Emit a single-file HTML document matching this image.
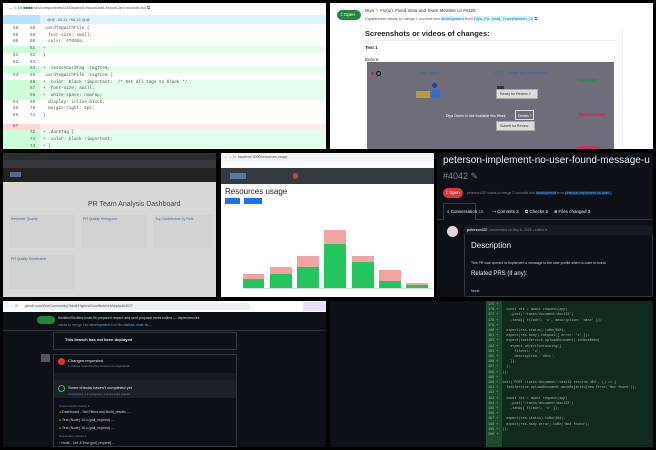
<!DOCTYPE html>
<html><head><meta charset="utf-8"><style>
*{margin:0;padding:0;box-sizing:border-box}
body{width:656px;height:450px;background:#000;position:relative;overflow:hidden;font-family:"Liberation Sans",sans-serif}
.p{position:absolute;overflow:hidden}
.a{position:absolute}
.r{position:absolute;left:0;right:0;height:6.7px;font:4.3px "Liberation Mono",monospace;color:#555;line-height:6.7px;white-space:nowrap}
.r i{position:absolute;font-style:normal}
.r .n1{left:10px}.r .n2{left:27px}.r .c{left:40px}
.g{background:#e6ffec}.g::before{content:"";position:absolute;left:0;top:0;width:37px;height:100%;background:#ccffd8}
.rd{background:#ffebe9}.rd::before{content:"";position:absolute;left:0;top:0;width:37px;height:100%;background:#ffd7d5}
.t{position:absolute;white-space:nowrap}
</style></head><body>

<!-- Panel 1 -->
<div class="p" style="left:3px;top:3px;width:323px;height:146px;background:#fff">
 <div class="t" style="left:6px;top:2px;font-size:4px;color:#555">⌄ ◇ 16 <span style="color:#1a7f37">■■■■</span> src/components/DASboard/LessonList/LessonCard.module.css ⧉</div>
 <div class="a" style="left:0;top:12px;width:323px;height:9px;background:#ddf4ff"></div>
 <div class="a" style="left:0;top:12px;width:37px;height:9px;background:#b6e3ff"></div>
 <div class="t" style="left:44px;top:14px;font-size:4px;color:#666">@@ -58,11 +58,16 @@</div>
 <div style="position:absolute;left:0;top:23px;width:323px">
  <div class="r" style="top:0"><i class="n1">58</i><i class="n2">58</i><i class="c">.cardTagWithFile {</i></div>
  <div class="r" style="top:6.7px"><i class="n1">59</i><i class="n2">59</i><i class="c">&nbsp;&nbsp;font-size: small;</i></div>
  <div class="r" style="top:13.4px"><i class="n1">60</i><i class="n2">60</i><i class="c">&nbsp;&nbsp;color: #70d8a;</i></div>
  <div class="r g" style="top:20.1px"><i class="n2">61</i><i class="c">+</i></div>
  <div class="r" style="top:26.8px"><i class="n1">61</i><i class="n2">62</i><i class="c">}</i></div>
  <div class="r" style="top:33.5px"><i class="n1">62</i><i class="n2">63</i></div>
  <div class="r g" style="top:40.2px"><i class="n2">64</i><i class="c">+ .lessonCardTag .tagItem,</i></div>
  <div class="r" style="top:46.9px"><i class="n1">63</i><i class="n2">65</i><i class="c">.cardTagWithFile .tagItem {</i></div>
  <div class="r g" style="top:53.6px"><i class="n2">66</i><i class="c">+ &nbsp;color: black !important; &nbsp;/* Set all tags to black */</i></div>
  <div class="r g" style="top:60.3px"><i class="n2">67</i><i class="c">+ &nbsp;font-size: small;</i></div>
  <div class="r g" style="top:67px"><i class="n2">68</i><i class="c">+ &nbsp;white-space: nowrap;</i></div>
  <div class="r" style="top:73.7px"><i class="n1">64</i><i class="n2">69</i><i class="c">&nbsp;&nbsp;display: inline-block;</i></div>
  <div class="r" style="top:80.4px"><i class="n1">65</i><i class="n2">70</i><i class="c">&nbsp;&nbsp;margin-right: 5px;</i></div>
  <div class="r" style="top:87.1px"><i class="n1">66</i><i class="n2">71</i><i class="c">}</i></div>
  <div class="r rd" style="top:97.5px"><i class="n1">67</i></div>
  <div class="r g" style="top:104.2px"><i class="n2">72</i><i class="c">+ .darkTag {</i></div>
  <div class="r g" style="top:110.9px"><i class="n2">73</i><i class="c">+ &nbsp;color: black !important;</i></div>
  <div class="r g" style="top:117.6px"><i class="n2">74</i><i class="c">+ }</i></div>
 </div>
</div>

<!-- Panel 2 -->
<div class="p" style="left:330px;top:3px;width:323px;height:146px;background:#fff">
 <div class="a" style="left:7px;top:7px;width:24px;height:10px;border-radius:5px;background:#1f883d"></div>
 <div class="t" style="left:11px;top:9px;font-size:4.5px;color:#fff">⟟ Open</div>
 <div class="t" style="left:35px;top:5px;font-size:4.5px;color:#333">Diya <span style="color:#d4a000">✎</span> Fix(ui): Fixed Insta and Team Member UI #5125</div>
 <div class="t" style="left:35px;top:13px;font-size:4px;color:#555">Diyafaheem wants to merge 1 commit into <span style="background:#ddf4ff;color:#0969da">development</span> from <span style="background:#ddf4ff;color:#0969da">Diya_Fix_Insta_TeamMember_UI</span> ⧉</div>
 <div class="a" style="left:292px;top:25px;width:1px;height:121px;background:#eee"></div>
 <div class="t" style="left:35px;top:26px;font-size:7.5px;font-weight:bold;color:#222">Screenshots or videos of changes:</div>
 <div class="a" style="left:35px;top:37px;width:250px;height:1px;background:#eee"></div>
 <div class="t" style="left:35px;top:42px;font-size:4.5px;color:#222;font-weight:bold">Test 1</div>
 <div class="t" style="left:35px;top:54px;font-size:4.5px;color:#333">Before:</div>
 <div class="a" style="left:37px;top:59px;width:247px;height:87px;background:#6e6d7a"></div>
 <div class="a" style="left:41px;top:69px;width:3px;height:3px;border-radius:2px;background:#b03050"></div>
 <div class="a" style="left:46px;top:68px;width:5px;height:5px;border-radius:3px;border:1px solid #111"></div>
 <div class="t" style="left:88px;top:67px;font-size:4px;color:#2f5bc0">Diya Owner</div>
 <div class="a" style="left:102px;top:80px;width:5px;height:5px;border-radius:3px;background:#1f3fb0"></div>
 <div class="a" style="left:86px;top:88px;width:14px;height:7px;background:#b89b3c"></div>
 <div class="a" style="left:102px;top:87px;width:8px;height:8px;background:#2f6fd6"></div>
 <div class="t" style="left:165px;top:68px;font-size:3.5px;color:#2f5bc0">#2071 - Update text of instruction...</div>
 <div class="a" style="left:167px;top:83px;width:7px;height:3px;background:#333"></div>
 <div class="a" style="left:166px;top:86px;width:42px;height:10px;background:#ddd;border:1px solid #aaa"></div>
 <div class="t" style="left:170px;top:89px;font-size:3.5px;color:#333">Ready for Review ?</div>
 <div class="a" style="left:166px;top:118px;width:39px;height:10px;background:#ddd;border:1px solid #aaa"></div>
 <div class="t" style="left:170px;top:121px;font-size:3.5px;color:#333">Submit for Review</div>
 <div class="t" style="left:116px;top:111px;font-size:3.5px;color:#fff">Diya Owner Is Not Available this Week</div>
 <div class="a" style="left:185px;top:107px;width:19px;height:10px;border:1px solid #ddd"></div>
 <div class="t" style="left:188px;top:111px;font-size:3.5px;color:#fff">Details ?</div>
 <div class="a" style="left:248px;top:76px;width:19px;height:3px;background:#2e8b57"></div>
 <div class="a" style="left:248px;top:110px;width:27px;height:3px;background:#c0395a"></div>
 <div class="a" style="left:248px;top:143px;width:20px;height:3px;background:#c0395a"></div>
</div>

<!-- Panel 3 -->
<div class="p" style="left:3px;top:153px;width:213px;height:144px;background:#d8d8d6">
 <div class="a" style="left:0;top:0;width:213px;height:7px;background:#2b2d30"></div>
 <div class="a" style="left:0;top:7px;width:213px;height:8px;background:#35373b"></div>
 <div class="a" style="left:0;top:15px;width:213px;height:14px;background:#222"></div>
 <div class="a" style="left:7px;top:19px;width:11px;height:5px;background:#5a6a8a"></div>
 <div class="t" style="left:85px;top:48px;font-size:7px;color:#444">PR Team Analysis Dashboard</div>
 <div class="a" style="left:6px;top:62px;width:66px;height:33px;background:#d2d2d0"></div>
 <div class="a" style="left:78px;top:62px;width:66px;height:33px;background:#d2d2d0"></div>
 <div class="a" style="left:150px;top:62px;width:60px;height:33px;background:#d2d2d0"></div>
 <div class="a" style="left:6px;top:102px;width:66px;height:34px;background:#d2d2d0"></div>
 <div class="t" style="left:8px;top:64px;font-size:3.5px;color:#4a6ab0">Reviewer Quality</div>
 <div class="t" style="left:80px;top:64px;font-size:3.5px;color:#4a6ab0">PR Quality Histogram</div>
 <div class="t" style="left:152px;top:64px;font-size:3.5px;color:#4a6ab0">Top Contributors by Role</div>
 <div class="t" style="left:8px;top:104px;font-size:3.5px;color:#4a6ab0">PR Quality Distribution</div>
</div>

<!-- Panel 4 -->
<div class="p" style="left:221px;top:153px;width:213px;height:144px;background:#fff">
 <div class="a" style="left:0;top:0;width:213px;height:8px;background:#f1f3f4"></div>
 <div class="t" style="left:3px;top:2px;font-size:3.5px;color:#555">← → ↻ &nbsp;localhost:3000/resources-usage</div>
 <div class="a" style="left:0;top:8px;width:213px;height:7px;background:#fafafa"></div>
 <div class="a" style="left:0;top:15px;width:213px;height:16px;background:#343a40"></div>
 <div class="a" style="left:9px;top:20px;width:16px;height:6px;background:#5676a8"></div>
 <div class="a" style="left:72px;top:20px;width:5px;height:6px;background:#dc3545;border-radius:3px"></div>
 <div class="t" style="left:4px;top:34px;font-size:8px;color:#222">Resources usage</div>
 <div class="a" style="left:4px;top:45px;width:15px;height:6px;background:#1a73e8"></div>
 <div class="a" style="left:23px;top:45px;width:18px;height:6px;background:#1a73e8"></div>
 <div class="a" style="left:22px;top:135px;width:190px;height:1px;background:#ddd"></div>
 <div class="a" style="left:22px;top:121px;width:21px;height:14px;background:#f4a3a3"></div><div class="a" style="left:22px;top:126px;width:21px;height:9px;background:#22c55e"></div>
 <div class="a" style="left:49px;top:114px;width:22px;height:21px;background:#f4a3a3"></div><div class="a" style="left:49px;top:121px;width:22px;height:14px;background:#22c55e"></div>
 <div class="a" style="left:76px;top:103px;width:22px;height:32px;background:#f4a3a3"></div><div class="a" style="left:76px;top:114px;width:22px;height:21px;background:#22c55e"></div>
 <div class="a" style="left:103px;top:77px;width:22px;height:58px;background:#f4a3a3"></div><div class="a" style="left:103px;top:91px;width:22px;height:44px;background:#22c55e"></div>
 <div class="a" style="left:131px;top:103px;width:22px;height:32px;background:#f4a3a3"></div><div class="a" style="left:131px;top:109px;width:22px;height:26px;background:#22c55e"></div>
 <div class="a" style="left:158px;top:117px;width:22px;height:18px;background:#f4a3a3"></div><div class="a" style="left:158px;top:128px;width:22px;height:7px;background:#22c55e"></div>
 <div class="a" style="left:185px;top:130px;width:22px;height:5px;background:#f4a3a3"></div><div class="a" style="left:185px;top:132px;width:22px;height:3px;background:#22c55e"></div>
</div>

<!-- Panel 5 -->
<div class="p" style="left:437px;top:153px;width:216px;height:144px;background:#0d1117">
 <div class="t" style="left:6px;top:2px;font-size:10px;color:#e6edf3">peterson-implement-no-user-found-message-u</div>
 <div class="t" style="left:6px;top:18px;font-size:9px;color:#7d8590">#4042 ✎</div>
 <div class="a" style="left:6px;top:35px;width:20px;height:10px;border-radius:5px;background:#da3633"></div>
 <div class="t" style="left:9px;top:37px;font-size:4.5px;color:#fff">⟟ Open</div>
 <div class="t" style="left:30px;top:38px;font-size:3.5px;color:#7d8590">peterson337 wants to merge 2 commits into <span style="color:#58a6ff;background:#122b4a">development</span> from <span style="color:#58a6ff;background:#122b4a">peterson-implement-no-user...</span></div>
 <div class="a" style="left:0;top:66px;width:216px;height:1px;background:#30363d"></div>
 <div class="a" style="left:6px;top:50px;width:33px;height:17px;border:1px solid #30363d;border-bottom:none;background:#0d1117"></div>
 <div class="t" style="left:10px;top:56px;font-size:4.5px;color:#e6edf3">⌕ Conversation <span style="color:#aaa">15</span> &nbsp;&nbsp;&nbsp;&nbsp;&nbsp;&nbsp;⇢ Commits 3 &nbsp;&nbsp;&nbsp;&nbsp;⧉ Checks 5 &nbsp;&nbsp;&nbsp;&nbsp;⊞ Files changed 3</div>
 <div class="a" style="left:10px;top:73px;width:11px;height:11px;border-radius:6px;background:#e8d5d5"></div>
 <div class="a" style="left:27px;top:72px;width:189px;height:72px;border:1px solid #30363d;border-radius:3px"></div>
 <div class="a" style="left:27px;top:72px;width:189px;height:10px;background:#161b22"></div>
 <div class="t" style="left:30px;top:75px;font-size:3.5px;color:#7d8590"><b style="color:#c9d1d9">peterson337</b> commented on Sep 8, 2025 • edited ▾</div>
 <div class="t" style="left:34px;top:88px;font-size:8px;color:#e6edf3">Description</div>
 <div class="t" style="left:34px;top:108px;font-size:3.5px;color:#c9d1d9">This PR was opened to implement a message in the user profile when no user is found.</div>
 <div class="t" style="left:34px;top:118px;font-size:6px;color:#e6edf3">Related PRS (if any):</div>
 <div class="t" style="left:34px;top:136px;font-size:3.5px;color:#c9d1d9">None.</div>
</div>

<!-- Panel 6 -->
<div class="p" style="left:3px;top:301px;width:323px;height:146px;background:#0d1117">
 <div class="a" style="left:0;top:0;width:323px;height:11px;background:#fff"></div>
 <div class="a" style="left:27px;top:2px;width:220px;height:7px;border-radius:4px;background:#eef0f3"></div>
 <div class="t" style="left:3px;top:3px;font-size:3.5px;color:#555">← → ⟳ &nbsp;&nbsp;&nbsp;&nbsp;&nbsp;&nbsp;github.com/OneCommunityGlobal/HighestGoodNetworkApp/pull/4027</div>
 <div class="a" style="left:300px;top:1px;width:23px;height:9px;background:#e8e0f8"></div>
 <div class="a" style="left:34px;top:15px;width:18px;height:8px;border-radius:4px;background:#238636"></div>
 <div class="t" style="left:55px;top:15px;font-size:3.5px;color:#c9d1d9">Sitzikbs/Sitzikbs-node-fix prepared reward and sent proposal meta outline — dependencies</div>
 <div class="t" style="left:55px;top:22px;font-size:3.5px;color:#7d8590">wants to merge into <span style="color:#58a6ff">development</span> from <span style="color:#58a6ff">fix-sitzikbs-node-fix-...</span></div>
 <div class="a" style="left:0;top:29px;width:323px;height:1px;background:#30363d"></div>
 <div class="a" style="left:50px;top:31px;width:184px;height:18px;border:1px solid #30363d"></div>
 <div class="t" style="left:62px;top:36px;font-size:4px;color:#e6edf3;font-weight:bold">This branch has not been deployed</div>
 <div class="a" style="left:38px;top:53px;width:9px;height:8px;background:#555"></div>
 <div class="a" style="left:50px;top:53px;width:184px;height:93px;border:1px solid #30363d"></div>
 <div class="a" style="left:55px;top:57px;width:7px;height:7px;border-radius:4px;background:#da3633"></div>
 <div class="t" style="left:65px;top:57px;font-size:4px;color:#e6edf3">Changes requested</div>
 <div class="t" style="left:65px;top:63px;font-size:3px;color:#7d8590">1 change requested for OneCommunityGlobal.</div>
 <div class="a" style="left:51px;top:72px;width:182px;height:7px;background:#161b22"></div>
 <div class="a" style="left:51px;top:79px;width:182px;height:18px;background:#1c2128"></div>
 <div class="a" style="left:55px;top:84px;width:7px;height:7px;border-radius:4px;border:1px solid #3fb950"></div>
 <div class="t" style="left:65px;top:84px;font-size:4px;color:#e6edf3">Some checks haven't completed yet</div>
 <div class="t" style="left:65px;top:91px;font-size:3px;color:#7d8590">2 expected, 1 in progress, 4 successful checks</div>
 <div class="t" style="left:56px;top:103px;font-size:3px;color:#7d8590">Unsuccessful checks ▾</div>
 <div class="t" style="left:56px;top:109px;font-size:3.5px;color:#c9d1d9"><span style="color:#d29922">●</span> Dashboard - Set Filters and Build_results ...</div>
 <div class="t" style="left:56px;top:117px;font-size:3.5px;color:#c9d1d9"><span style="color:#d29922">●</span> Test (Node) 14.x (pull_request) ...</div>
 <div class="t" style="left:56px;top:125px;font-size:3.5px;color:#c9d1d9"><span style="color:#d29922">●</span> Test (Node) 16.x (pull_request) ...</div>
 <div class="t" style="left:56px;top:133px;font-size:3px;color:#7d8590">Successful checks ▾</div>
 <div class="t" style="left:56px;top:140px;font-size:3.5px;color:#c9d1d9"><span style="color:#3fb950">▪</span> Node - Lint &amp; Test (pull_request) ...</div>
</div>

<!-- Panel 7 -->
<div class="p" style="left:330px;top:301px;width:323px;height:146px;background:#0d1117">
 <div class="a" style="left:156px;top:0;width:167px;height:146px;background:#112a1e"></div>
 <div class="a" style="left:156px;top:0;width:16px;height:146px;background:#1b4a2e"></div>
 <div style="position:absolute;left:158px;top:2px;font:3.4px/5.2px 'Liberation Mono',monospace;color:#9fb8a8;white-space:pre">175 +
176 +    const res = await request(app)
177 +      .post('/tasks/document/doc123')
178 +      .send({ fileUrl: 'x', description: 'desc' });
179 +
180 +    expect(res.status).toBe(500);
181 +    expect(res.body).toEqual({ error: 'x' });
182 +    expect(taskService.uploadDocument).toHaveBeen(
183 +      expect.objectContaining({
184 +        fileUrl: 'x',
185 +        description: 'desc',
186 +      }),
187 +    );
188 +  });
189 +
190 +  test('POST /tasks/document/:taskId returns 404', () => {
191 +    TaskService.uploadDocument.mockRejected(new Error('Not found'));
192 +
193 +    const res = await request(app)
194 +      .post('/tasks/document/doc123')
195 +      .send({ fileUrl: 'x' });
196 +
197 +    expect(res.status).toBe(404);
198 +    expect(res.body.error).toBe('Not found');
199 +  });
200 +</div>
</div>

</body></html>
